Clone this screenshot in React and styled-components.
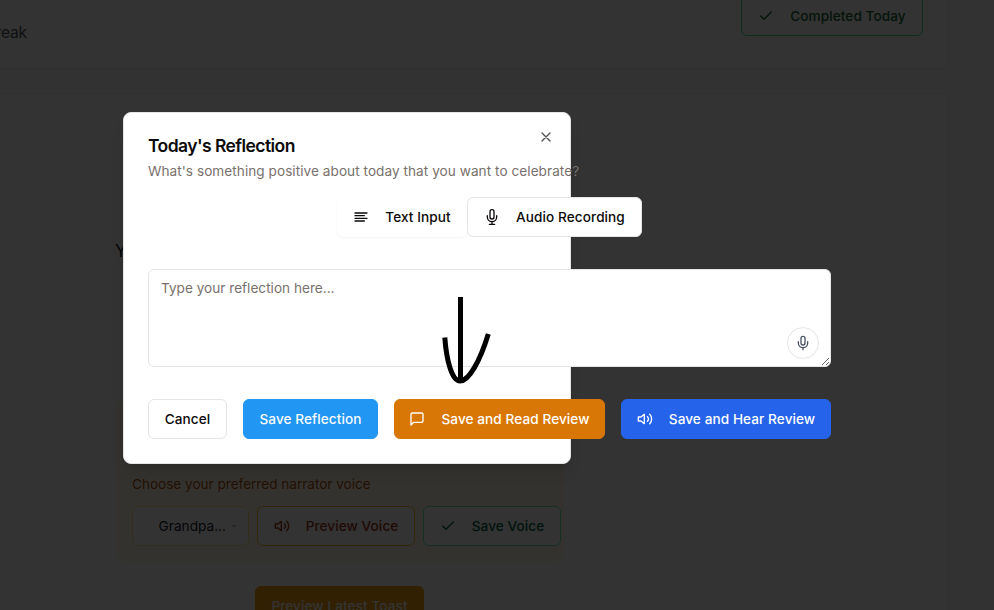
import React from "react";
import styled, { createGlobalStyle, css } from "styled-components";

const GlobalStyle = createGlobalStyle`
  *, *::before, *::after { box-sizing: border-box; }
  body {
    margin: 0;
    background: #fafafa;
    color: #0c0a09;
    font-family: Inter, "Liberation Sans", sans-serif;
    overflow: hidden;
  }
`;

const Page = styled.main`
  position: relative;
  display: flex;
  flex-direction: column;
  gap: 24px;
  width: 994px;
  height: 610px;
  overflow: hidden;
`;

const Card = styled.section`
  width: 968px;
  margin-left: -20px;
  flex: none;
  background: #fff;
  border: 1px solid #f1f1f1;
  border-radius: 8px;
  box-shadow: 0 1px 2px rgba(0, 0, 0, 0.05);
`;

const StreakCard = styled(Card)`
  display: flex;
  justify-content: space-between;
  align-items: flex-start;
  height: 89px;
  margin-top: -20px;
  padding: 15px 24px 0 0;
`;

const StreakText = styled.p`
  width: 46px;
  margin: 25px 0 0;
  display: flex;
  justify-content: flex-end;
  white-space: nowrap;
  font-size: 15.6px;
  line-height: 24px;
  letter-spacing: -0.15px;
  color: #4b5563;
`;

const JournalCard = styled(Card)`
  display: flex;
  flex-direction: column;
  height: 640px;
  padding: 143px 0 0 135px;
`;

const Prompt = styled.h3`
  margin: 0 0 0 -1px;
  font-size: 17px;
  line-height: 28px;
  font-weight: 400;
  color: #1f2937;
`;

const VoicePanel = styled.div`
  display: flex;
  flex-direction: column;
  justify-content: flex-end;
  gap: 12px;
  width: 448px;
  height: 162px;
  margin-top: 135px;
  padding: 15px 2px 15px 15px;
  border: 1px solid #fef9e7;
  border-radius: 8px;
  background: #fffbeb;
`;

const VoiceLabel = styled.p`
  margin: 0;
  font-size: 13.6px;
  line-height: 20px;
  letter-spacing: -0.02px;
  color: #b45309;
`;

const Row = styled.div`
  display: flex;
  gap: ${(p) => p.$gap || 0}px;
  ${(p) => p.$center && "justify-content: center;"}
`;

const tones = {
  outline: css`background: #fff; border-color: #e5e5e5; color: #0c0a09;`,
  ghost: css`background: #fff; border-color: transparent; color: #0c0a09; box-shadow: 0 1px 2px rgba(0, 0, 0, 0.05);`,
  primary: css`background: #2196f3; border-color: #2196f3; color: #f8fafc;`,
  amber: css`background: #d97706; border-color: #d97706; color: #fff;`,
  sun: css`background: #f59e0b; border-color: #f59e0b; color: #fff;`,
  blue: css`background: #2563eb; border-color: #2563eb; color: #fff;`,
  green: css`background: #fff; border-color: #4ade80; color: #166534;`,
  emerald: css`background: #fff; border-color: #6ee7b7; color: #065f46;`,
  gold: css`background: #fff; border-color: #fbbf24; color: #9a3412;`,
};

const Button = styled.button`
  display: inline-flex;
  align-items: center;
  justify-content: center;
  gap: 16px;
  flex: none;
  width: ${(p) => p.$width}px;
  height: 40px;
  padding: 0;
  border: 1px solid;
  border-radius: 6px;
  font: 480 13.6px/20px Inter, "Liberation Sans", sans-serif;
  letter-spacing: 0.08px;
  white-space: nowrap;
  ${(p) => tones[p.$tone]}
`;

const ToastButton = styled(Button)`
  margin: 24px 0 0 139px;
`;

const VoiceSelect = styled.button`
  display: flex;
  align-items: center;
  justify-content: flex-end;
  gap: 5px;
  flex: none;
  width: 117px;
  height: 40px;
  padding: 0 11px 0 0;
  border: 1px solid #fde68a;
  border-radius: 6px;
  background: #fff;
  color: #0f172a;
  font: 400 13.6px/20px Inter, "Liberation Sans", sans-serif;
  letter-spacing: 0.03px;
`;

const Overlay = styled.div`
  position: absolute;
  inset: 0;
  background: rgba(0, 0, 0, 0.8);
`;

const Dialog = styled.div`
  position: absolute;
  left: 123px;
  top: 112px;
  display: flex;
  flex-direction: column;
  width: 448px;
  height: 352px;
  padding: 24px;
  border: 1px solid #e7e5e4;
  border-radius: 8px;
  background: #fff;
  box-shadow: 0 10px 15px -3px rgba(0, 0, 0, 0.1), 0 4px 6px -4px rgba(0, 0, 0, 0.1);
`;

const Body = styled.div`
  display: flex;
  flex-direction: column;
  width: 683px;
`;

const Title = styled.h2`
  margin: 0;
  font-size: 17.5px;
  line-height: 18px;
  font-weight: 600;
  letter-spacing: -0.57px;
`;

const Description = styled.p`
  margin: 6px 0 16px;
  font-size: 13.6px;
  line-height: 20px;
  letter-spacing: 0.05px;
  color: #78716c;
`;

const CloseButton = styled.button`
  position: absolute;
  top: 16px;
  right: 16px;
  display: flex;
  padding: 0;
  border: 0;
  background: none;
  color: #0c0a09;
  opacity: 0.7;
`;

const Field = styled.div`
  position: relative;
  margin: 32px 0;
  height: 98px;
`;

const TextArea = styled.textarea`
  display: block;
  width: 100%;
  height: 98px;
  padding: 8px 12px;
  border: 1px solid #e5e5e5;
  border-radius: 6px;
  background: #fff;
  outline: none;
  resize: vertical;
  font: 400 13.6px/20px Inter, "Liberation Sans", sans-serif;
  letter-spacing: 0.01px;
  &::placeholder { color: #78716c; opacity: 1; }
`;

const MicButton = styled.button`
  position: absolute;
  right: 12px;
  bottom: 8px;
  display: flex;
  align-items: center;
  justify-content: center;
  width: 32px;
  height: 32px;
  padding: 0;
  border: 1px solid #e5e5e5;
  border-radius: 50%;
  background: #fff;
  color: #4b5563;
`;

const Arrow = styled.svg`
  position: absolute;
  left: 440px;
  top: 295px;
`;

const Svg = ({ size = 16, weight = 2, children }) => (
  <svg width={size} height={size} viewBox="0 0 24 24" fill="none" stroke="currentColor"
    strokeWidth={weight} strokeLinecap="round" strokeLinejoin="round">
    {children}
  </svg>
);

const CheckIcon = () => <Svg><path d="M20 6 9 17l-5-5" /></Svg>;
const SpeakerIcon = () => (
  <Svg>
    <path d="M11 5 6 9H2v6h4l5 4z" />
    <path d="M19.07 4.93a10 10 0 0 1 0 14.14M15.54 8.46a5 5 0 0 1 0 7.07" />
  </Svg>
);
const LinesIcon = () => <Svg><path d="M3 6h18M3 10h14M3 14h18M3 18h14" /></Svg>;
const StandMicIcon = () => (
  <Svg>
    <path d="M12 1a3 3 0 0 0-3 3v8a3 3 0 0 0 6 0V4a3 3 0 0 0-3-3zM19 10v2a7 7 0 0 1-14 0v-2M12 19v4M8 23h8" />
  </Svg>
);
const MicIcon = () => (
  <Svg>
    <path d="M12 2a3 3 0 0 0-3 3v7a3 3 0 0 0 6 0V5a3 3 0 0 0-3-3zM19 10v2a7 7 0 0 1-14 0v-2M12 19v3" />
  </Svg>
);
const ChatIcon = () => (
  <Svg><path d="M21 15a2 2 0 0 1-2 2H7l-4 4V5a2 2 0 0 1 2-2h14a2 2 0 0 1 2 2z" /></Svg>
);
const CloseIcon = () => <Svg><path d="M18 6 6 18M6 6l12 12" /></Svg>;
const ChevronIcon = () => <Svg size={6} weight={2}><path d="m5 9 7 6 7-6" /></Svg>;

export default function App() {
  return (
    <>
      <GlobalStyle />
      <Page>
        <StreakCard>
          <StreakText>Streak</StreakText>
          <Button $tone="green" $width={182}><CheckIcon />Completed Today</Button>
        </StreakCard>
        <JournalCard>
          <Prompt>Your Journal</Prompt>
          <VoicePanel>
            <VoiceLabel>Choose your preferred narrator voice</VoiceLabel>
            <Row $gap={8}>
              <VoiceSelect>Grandpa...<ChevronIcon /></VoiceSelect>
              <Button $tone="gold" $width={158}><SpeakerIcon />Preview Voice</Button>
              <Button $tone="emerald" $width={138}><CheckIcon />Save Voice</Button>
            </Row>
          </VoicePanel>
          <ToastButton $tone="sun" $width={169}>Preview Latest Toast</ToastButton>
        </JournalCard>

        <Overlay />

        <Dialog role="dialog">
          <Body>
            <Title>Today's Reflection</Title>
            <Description>What's something positive about today that you want to celebrate?</Description>
            <Row $center>
              <Button $tone="ghost" $width={130}><LinesIcon />Text Input</Button>
              <Button $tone="outline" $width={175}><StandMicIcon />Audio Recording</Button>
            </Row>
            <Field>
              <TextArea placeholder="Type your reflection here..." />
              <MicButton aria-label="Dictate"><MicIcon /></MicButton>
            </Field>
            <Row $gap={16}>
              <Button $tone="outline" $width={79}>Cancel</Button>
              <Button $tone="primary" $width={135}>Save Reflection</Button>
              <Button $tone="amber" $width={211}><ChatIcon />Save and Read Review</Button>
              <Button $tone="blue" $width={210}><SpeakerIcon />Save and Hear Review</Button>
            </Row>
          </Body>
          <CloseButton aria-label="Close"><CloseIcon /></CloseButton>
        </Dialog>

        <Arrow width="54" height="92" fill="none" stroke="#000" strokeWidth="5">
          <path d="M20.5 2v82" />
          <path d="M4.8 42.5C6.5 66 12 86 20 86C29 86 40 66 48.3 39" />
        </Arrow>
      </Page>
    </>
  );
}
